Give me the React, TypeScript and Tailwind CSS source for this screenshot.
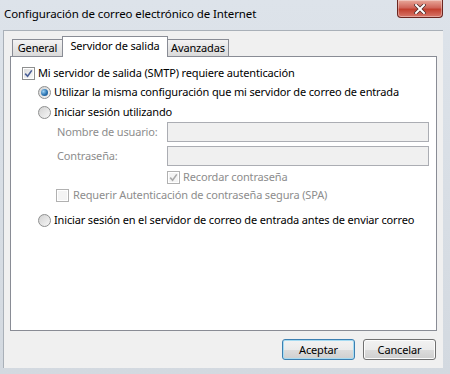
import React from "react";

const font = "font-['Noto_Sans',sans-serif]";

const Check = ({ checked, disabled }: { checked?: boolean; disabled?: boolean }) => (
  <div
    className={`w-[13px] h-[13px] shrink-0 border ${
      disabled ? "border-[#b1b1b1]" : "border-[#8e8f8f]"
    } bg-white p-[1px]`}
  >
    <div
      className={`relative w-full h-full ${
        disabled
          ? "bg-[#f4f4f4]"
          : "bg-gradient-to-br from-[#dcdcdc] to-[#fafafa]"
      }`}
    >
      {checked && (
        <svg viewBox="0 0 9 9" className="absolute inset-0 w-full h-full">
          <path
            d="M1.2 4.6 L3.6 7.2 L7.8 1.4"
            fill="none"
            stroke={disabled ? "#a9a9a9" : "#4a5f97"}
            strokeWidth="1.6"
          />
        </svg>
      )}
    </div>
  </div>
);

const Radio = ({ checked }: { checked?: boolean }) => (
  <div className="w-[13px] h-[13px] shrink-0 rounded-full border border-[#8e8f8f] bg-gradient-to-br from-[#d2d2d2] to-[#f7f7f7] flex items-center justify-center">
    {checked && (
      <div className="w-[7px] h-[7px] rounded-full bg-[radial-gradient(circle_at_35%_35%,#9fd3f5,#2a73b1_55%,#1c4f85)]" />
    )}
  </div>
);

const Btn = ({ label, primary }: { label: string; primary?: boolean }) => (
  <div
    className={`w-[73px] h-[21px] rounded-[3px] border ${
      primary ? "border-[#3c7fb1] shadow-[inset_0_0_0_1px_#a6dbf2]" : "border-[#707070] shadow-[inset_0_0_0_1px_#fcfcfc]"
    } bg-[linear-gradient(#f2f2f2,#ebebeb_50%,#dddddd_51%,#cfcfcf)] flex items-center justify-center text-black`}
  >
    {label}
  </div>
);

export default function App() {
  return (
    <div className={`w-[450px] h-[374px] flex flex-col bg-[linear-gradient(#dde3ea,#d3d9e0)] ${font} text-[11px] tracking-[-0.15px] leading-[16px] whitespace-nowrap text-black overflow-hidden`}>
      {/* title bar */}
      <div className="h-[30px] flex items-start shrink-0">
        <div className="pl-[4px] pt-[6px] flex-1 text-[11.5px] tracking-[-0.1px] leading-[16px]">
          Configuración de correo electrónico de Internet
        </div>
        <div className="w-[46px] h-[18px] mr-[7px] rounded-b-[4px] border border-t-0 border-[#6b2620] bg-[linear-gradient(#e9a99b,#d0665a_45%,#c2402f_55%,#d8776a)] flex items-center justify-center shadow-[inset_0_0_0_1px_rgba(255,255,255,0.35)]">
          <svg width="12" height="10" viewBox="0 0 12 10">
            <path d="M2 1 L10 9 M10 1 L2 9" stroke="#4a2a28" strokeWidth="3.4" strokeLinecap="square" />
            <path d="M2 1 L10 9 M10 1 L2 9" stroke="#ffffff" strokeWidth="2" strokeLinecap="square" />
          </svg>
        </div>
      </div>

      {/* client */}
      <div className="ml-[3px] mr-[7px] h-[338px] shrink-0 bg-[#f0f0f0] border-l border-t border-[#a9b0b8] px-[6px] pt-[5px] flex flex-col">
        {/* tabs */}
        <div className="h-[20px] flex items-end pl-[2px] relative z-10">
          <div className="h-[17px] w-[51px] border border-b-0 border-[#898c95] bg-[linear-gradient(#f3f3f3,#e6e6e6_50%,#dadada)] flex items-center justify-center">
            General
          </div>
          <div className="h-[21px] -mb-px w-[106px] -ml-px border border-b-0 border-[#898c95] bg-white flex items-center justify-center pb-[3px]">
            Servidor de salida
          </div>
          <div className="h-[17px] w-[62px] -ml-px border border-b-0 border-[#898c95] bg-[linear-gradient(#f3f3f3,#e6e6e6_50%,#dadada)] flex items-center justify-center">
            Avanzadas
          </div>
        </div>

        {/* panel */}
        <div className="h-[275px] border border-[#898c95] bg-white pt-[7px] pl-[11px] pr-[7px] flex flex-col">
          <div className="h-[18px] flex items-center gap-[3px]">
            <Check checked />
            <span>Mi servidor de salida (SMTP) requiere autenticación</span>
          </div>
          <div className="mt-[1px] h-[18px] flex items-center gap-[3px] pl-[16px]">
            <Radio checked />
            <span>Utilizar la misma configuración que mi servidor de correo de entrada</span>
          </div>
          <div className="mt-[2px] h-[18px] flex items-center gap-[3px] pl-[16px]">
            <Radio />
            <span>Iniciar sesión utilizando</span>
          </div>
          <div className="mt-[1px] h-[20px] flex items-center pl-[35px] text-[#8d8d8d]">
            <span className="w-[110px] shrink-0">Nombre de usuario:</span>
            <div className="flex-1 h-[20px] border border-[#abadb3] bg-[#f0f0f0]" />
          </div>
          <div className="mt-[4px] h-[20px] flex items-center pl-[35px] text-[#8d8d8d]">
            <span className="w-[110px] shrink-0">Contraseña:</span>
            <div className="flex-1 h-[20px] border border-[#abadb3] bg-[#f0f0f0]" />
          </div>
          <div className="mt-[2px] h-[18px] flex items-center gap-[3px] pl-[145px] text-[#8d8d8d]">
            <Check checked disabled />
            <span>Recordar contraseña</span>
          </div>
          <div className="h-[18px] flex items-center gap-[4px] pl-[34px] text-[#8d8d8d]">
            <Check disabled />
            <span>Requerir Autenticación de contraseña segura (SPA)</span>
          </div>
          <div className="mt-[7px] h-[18px] flex items-center gap-[3px] pl-[16px]">
            <Radio />
            <span>Iniciar sesión en el servidor de correo de entrada antes de enviar correo</span>
          </div>
        </div>

        {/* buttons */}
        <div className="mt-[8px] flex justify-end gap-[8px] pr-[1px]">
          <Btn label="Aceptar" primary />
          <Btn label="Cancelar" />
        </div>
      </div>
    </div>
  );
}
